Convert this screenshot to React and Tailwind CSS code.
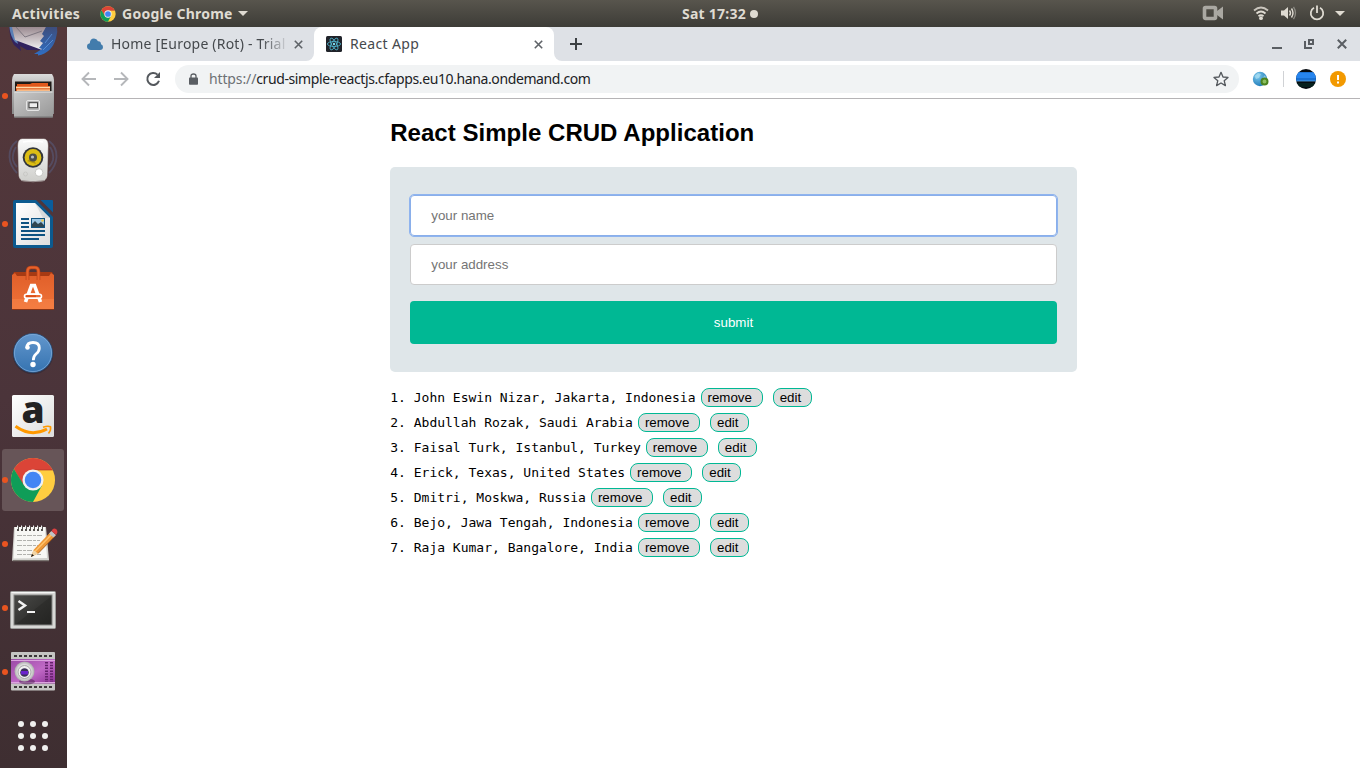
import React from "react";

const people = [
  "John Eswin Nizar, Jakarta, Indonesia",
  "Abdullah Rozak, Saudi Arabia",
  "Faisal Turk, Istanbul, Turkey",
  "Erick, Texas, United States",
  "Dmitri, Moskwa, Russia",
  "Bejo, Jawa Tengah, Indonesia",
  "Raja Kumar, Bangalore, India",
];

function ChromeLogo({ className }) {
  return (
    <svg viewBox="0 0 48 48" className={className}>
      <circle cx="24" cy="24" r="23" fill="#ffcd40" />
      <path d="M4.1 12.5A23 23 0 0 1 43.9 12.5L44 13.5H24L14 29.8Z" fill="#db4437" />
      <path d="M4.1 12.5A23 23 0 0 0 24 47L33.5 29.5L24 34.5L14.5 29.5Z" fill="#0f9d58" />
      <path d="M24 13.5H44.5" stroke="#b5362b" strokeWidth="0.8" />
      <circle cx="24" cy="24" r="11" fill="#f1f1f1" />
      <circle cx="24" cy="24" r="8.6" fill="#4285f4" />
    </svg>
  );
}

function Thunderbird() {
  return (
    <svg viewBox="0 27 67 37" className="h-[37px] w-[67px]">
      <defs>
        <linearGradient id="mail" x1="0" y1="0" x2="0" y2="1">
          <stop offset="0" stopColor="#9a8a90" />
          <stop offset="1" stopColor="#f4f2f4" />
        </linearGradient>
        <linearGradient id="bird" x1="0" y1="0" x2="0" y2="1">
          <stop offset="0" stopColor="#3d4d7c" />
          <stop offset="1" stopColor="#2f6fc4" />
        </linearGradient>
      </defs>
      <path d="M9.5 27Q9 37 14 45L21 51L20 46L27 50L44 50L46 27Z" fill="#32235e" />
      <path d="M9.5 27Q10 36 15 42L18 44L14 27Z" fill="#5a7fb5" />
      <path d="M12 27L15 40L42 50L46 27Z" fill="url(#mail)" />
      <path d="M16 27L25 37L42 31" fill="none" stroke="#77707a" strokeWidth="0.9" />
      <path d="M46 27L42 34L44 36L40 41L43 43L39 48L42 49L34 54L38 54L38 55.5Q52 53 56 38Q58 32 57 27Z" fill="url(#bird)" />
      <path d="M45 43L52 34M43 50L53 40" stroke="#5d95df" strokeWidth="0.8" />
    </svg>
  );
}

function Files() {
  return (
    <svg viewBox="0 0 67 64" className="h-16 w-[67px]">
      <defs>
        <linearGradient id="cab" x1="0" y1="0" x2="0" y2="1">
          <stop offset="0" stopColor="#dcdcdc" />
          <stop offset="0.3" stopColor="#b8b8b8" />
          <stop offset="1" stopColor="#8a8a8a" />
        </linearGradient>
        <linearGradient id="cabFront" x1="0" y1="0" x2="1" y2="1">
          <stop offset="0" stopColor="#c9c9c9" />
          <stop offset="1" stopColor="#979797" />
        </linearGradient>
      </defs>
      <path d="M14 10H52Q54 13 54 16V50H12V16Q12 13 14 10Z" fill="url(#cab)" />
      <rect x="15" y="17.5" width="36.5" height="10" fill="#1f1a17" />
      <path d="M17 20H30L32 19H48V22H50V27H16V22H17Z" fill="#e0581c" />
      <path d="M16 23.5H50M17 26.2H50" stroke="#ffd9a8" strokeWidth="1.3" />
      <rect x="14" y="27.5" width="39" height="26" rx="1" fill="url(#cabFront)" />
      <path d="M14.5 28H52.5" stroke="#e8e8e8" />
      <path d="M14 53H53" stroke="#737373" />
      <rect x="26.5" y="36.5" width="13" height="10" rx="1.5" fill="#b4b4b4" stroke="#e5e5e5" />
      <rect x="29" y="38.7" width="8.5" height="5" fill="#eee" stroke="#3d3d3d" />
    </svg>
  );
}

function Rhythmbox() {
  return (
    <svg viewBox="0 0 67 64" className="h-16 w-[67px]">
      <defs>
        <linearGradient id="spk" x1="0" y1="0" x2="0" y2="1">
          <stop offset="0" stopColor="#fafafa" />
          <stop offset="1" stopColor="#cfcfcc" />
        </linearGradient>
      </defs>
      <g fill="none" stroke="#5b6b98" strokeWidth="1.8" opacity="0.4">
        <path d="M17 13Q9 19 9.500 29Q10 38 17 45M16 19Q12 25 13 32Q14 36 17 39" />
        <path d="M49 13Q57 19 56.500 29Q56 38 49 45M50 19Q54 25 53 32Q52 36 49 39" />
      </g>
      <path d="M22 11H44Q48 11 48 18L47 48Q46 53 41 53H25Q20 53 19 48L18 18Q18 11 22 11Z" fill="url(#spk)" stroke="#e0e0dd" strokeWidth="0.5" />
      <path d="M23 14Q33 12 43 14" stroke="#fff" strokeWidth="1.5" fill="none" />
      <circle cx="33" cy="29.500" r="10.3" fill="#33363a" />
      <circle cx="33" cy="29.500" r="8.4" fill="#dcbd14" />
      <path d="M27 33L33 29.500L36 36Z" fill="#8a740c" opacity="0.55" />
      <circle cx="33" cy="29.500" r="4" fill="#4e4f48" />
      <circle cx="32.500" cy="29" r="1.6" fill="#b8bcc0" />
      <circle cx="39" cy="44.500" r="3.8" fill="#fff" stroke="#b9b9b6" strokeWidth="0.7" />
      <circle cx="25.500" cy="46" r="2" fill="none" stroke="#c4c4c0" strokeWidth="0.8" />
      <path d="M21 52.500Q33 55 45 52.500" stroke="#9a8f8f" fill="none" />
    </svg>
  );
}

function Writer() {
  return (
    <svg viewBox="0 0 67 64" className="h-16 w-[67px]">
      <defs>
        <linearGradient id="page" x1="0" y1="0" x2="1" y2="1">
          <stop offset="0" stopColor="#ffffff" />
          <stop offset="1" stopColor="#dedede" />
        </linearGradient>
      </defs>
      <path d="M15 8H36L53 25V54Q53 56 51 56H15Q13 56 13 54V10Q13 8 15 8Z" fill="#0c5a8f" />
      <path d="M16 11H35L50 26V53H16Z" fill="url(#page)" />
      <path d="M35 11L50 26H43Z" fill="#c7cbcf" opacity="0.6" />
      <path d="M40.500 8H52Q53 8 53 9V20.500Z" fill="#0a5d9b" />
      <g stroke="#0f5381" strokeWidth="1.9">
        <path d="M21 27H29M21 31H29M21 35H29M21 39H45M21 43H45M21 47H39" />
      </g>
      <rect x="31.500" y="26.500" width="13" height="9" fill="#9dc7e4" stroke="#0f5381" />
      <path d="M32 35V32L35 29L38 32L41 30L44 33V35Z" fill="#2f4651" />
      <circle cx="42.500" cy="28.500" r="1.3" fill="#efc94f" />
    </svg>
  );
}

function Software() {
  return (
    <svg viewBox="0 0 67 64" className="h-16 w-[67px]">
      <defs>
        <linearGradient id="bag" x1="0" y1="0" x2="0" y2="1">
          <stop offset="0" stopColor="#e05f2a" />
          <stop offset="1" stopColor="#ef7238" />
        </linearGradient>
      </defs>
      <path d="M14 16H52L54 20H12Z" fill="#a63a13" />
      <path d="M12 19L15 17L17 20H49L51 17L54 19V53H12Z" fill="url(#bag)" />
      <path d="M12 43H54V53H12Z" fill="#ff9257" opacity="0.35" />
      <path d="M27.500 24V16Q27.500 11.500 31 11.500H35Q38.500 11.500 38.500 16V24" fill="none" stroke="#b8431a" strokeWidth="3.6" />
      <path d="M27.500 24V16Q27.500 11.500 31 11.500H35Q38.500 11.500 38.500 16V24" fill="none" stroke="#e8622b" strokeWidth="2.2" />
      <path d="M25.500 46L31.500 29.500H34.500L40.500 46M28 39H38" fill="none" stroke="#fff" strokeWidth="3.6" />
      <rect x="24.500" y="38.300" width="17" height="3.800" rx="1.900" fill="#ed6c34" stroke="#fff" strokeWidth="1.600" />
      <path d="M26 40.200H36" stroke="#d94f19" strokeWidth="1.8" />
      <path d="M12 53.500H54" stroke="#853316" />
    </svg>
  );
}

function Help() {
  return (
    <svg viewBox="0 0 67 64" className="h-16 w-[67px]">
      <defs>
        <linearGradient id="helpBg" x1="0" y1="0" x2="0" y2="1">
          <stop offset="0" stopColor="#6397cd" />
          <stop offset="1" stopColor="#3573b0" />
        </linearGradient>
      </defs>
      <circle cx="33" cy="34" r="20.300" fill="#2a2636" opacity="0.5" />
      <circle cx="33" cy="33" r="19.500" fill="url(#helpBg)" stroke="#284e79" strokeWidth="0.8" />
      <circle cx="33" cy="33" r="18.600" fill="none" stroke="#82afdc" strokeWidth="0.7" />
      <path d="M27 27.500Q27 22.500 33 22.500Q39.300 22.500 39.300 28Q39.300 31.300 36 34Q33.300 36.300 33.300 40.300" fill="none" stroke="#fff" strokeWidth="2.800" />
      <circle cx="27.500" cy="27.500" r="2.300" fill="#fff" />
      <circle cx="33" cy="44.500" r="2.700" fill="#fff" />
    </svg>
  );
}

function Amazon() {
  return (
    <svg viewBox="0 0 67 64" className="h-16 w-[67px]">
      <defs>
        <linearGradient id="amz" x1="0" y1="0" x2="1" y2="1">
          <stop offset="0" stopColor="#ffffff" />
          <stop offset="0.5" stopColor="#eeeeee" />
          <stop offset="1" stopColor="#dcdcdc" />
        </linearGradient>
      </defs>
      <rect x="12" y="11" width="42" height="42" rx="1.500" fill="url(#amz)" />
      <text x="33" y="39" textAnchor="middle" fontFamily="Open Sans" fontWeight="800" fontSize="37" fill="#222">a</text>
      <path d="M15.500 42.300Q31 53.500 47 45" fill="none" stroke="#ff9900" strokeWidth="3" />
      <path d="M43 43.300Q48 41.500 50.500 42.800Q51.300 46 48.500 49.500" fill="none" stroke="#ff9900" strokeWidth="1.600" />
    </svg>
  );
}

function Notes() {
  return (
    <svg viewBox="0 0 67 64" className="h-16 w-[67px]">
      <path d="M14 15H46L49 48L12 49Z" fill="#d1d1cd" />
      <path d="M15 15H45L47 46L13.500 46.500Z" fill="#f7f7f4" />
      <path d="M12.500 48.700H49" stroke="#7b7571" strokeWidth="1.200" />
      <path d="M18 14V19M22 14V19M26 14V19M30 14V19M34 14V19M38 14V19M42 14V19" stroke="#55524f" strokeWidth="2" />
      <path d="M17.500 13.500V17M21.500 13.500V17M25.500 13.500V17M29.500 13.500V17M33.500 13.500V17M37.500 13.500V17M41.500 13.500V17" stroke="#eeeeee" strokeWidth="1" />
      <g stroke="#a9a9a6" strokeWidth="0.900" strokeDasharray="5 1 3 1">
        <path d="M17 23.500H43M17 28.500H40M17 33.500H38M17 38.500H33M17 42.500H41" />
      </g>
      <path d="M31 45L33.500 38L51 19.500L55.500 23.500L38 41.500Z" fill="#ee9838" />
      <path d="M35 39.500L53 21" stroke="#ffc36b" strokeWidth="1.500" />
      <path d="M38 41.500L55.500 23.500" stroke="#aa5d16" strokeWidth="0.900" />
      <path d="M31 45L33.500 38L38 41.500Z" fill="#f0d4a5" />
      <path d="M31 45L32 42L34 43.500Z" fill="#111" />
      <path d="M49 21.500L51.500 19L56 23L53.500 25.500Z" fill="#bfc3c7" />
      <path d="M51.500 19Q53.500 15 56.500 17.500Q58.500 20 56 23Z" fill="#dc4040" />
    </svg>
  );
}

function Terminal() {
  return (
    <svg viewBox="0 0 67 64" className="h-16 w-[67px]">
      <defs>
        <linearGradient id="term" x1="0" y1="0" x2="1" y2="1">
          <stop offset="0" stopColor="#4a4a48" />
          <stop offset="0.5" stopColor="#363634" />
          <stop offset="0.52" stopColor="#2e2e2c" />
          <stop offset="1" stopColor="#242422" />
        </linearGradient>
      </defs>
      <rect x="10.500" y="15.500" width="45" height="37" rx="1" fill="#d8d8d6" stroke="#9b9b99" />
      <path d="M11.500 16.500H54.500" stroke="#f6f6f6" />
      <rect x="13.500" y="18.500" width="39" height="31" fill="#848482" />
      <rect x="14.500" y="19.500" width="37" height="29" fill="url(#term)" />
      <path d="M18.500 25L25 29.500L18.500 34" fill="none" stroke="#f2f2f2" strokeWidth="2.500" />
      <path d="M27 36H35" stroke="#f2f2f2" strokeWidth="2" />
    </svg>
  );
}

function Recorder() {
  return (
    <svg viewBox="0 0 67 64" className="h-16 w-[67px]">
      <defs>
        <linearGradient id="film" x1="0" y1="0" x2="1" y2="1">
          <stop offset="0" stopColor="#9a4aa5" />
          <stop offset="0.55" stopColor="#c069c6" />
          <stop offset="1" stopColor="#8c3295" />
        </linearGradient>
        <radialGradient id="lens">
          <stop offset="0" stopColor="#999" />
          <stop offset="0.6" stopColor="#eee" />
          <stop offset="1" stopColor="#aaa" />
        </radialGradient>
      </defs>
      <rect x="11" y="12" width="44" height="38.500" rx="1" fill="#c4c4c2" />
      <rect x="11" y="19" width="44" height="24.500" fill="url(#film)" />
      <path d="M11 20.500H55M11 42.500H55" stroke="#dba4de" />
      <path d="M14 16H53M14 47H53" stroke="#3b3738" strokeWidth="2" strokeDasharray="3 2" />
      <path d="M46.500 22V42M51.500 22V42" stroke="#64216c" strokeWidth="3" strokeDasharray="1.500 1.300" />
      <ellipse cx="27" cy="41.500" rx="8" ry="3" fill="#3d1542" opacity="0.45" />
      <circle cx="24.500" cy="31.500" r="10" fill="url(#lens)" />
      <circle cx="24.500" cy="32" r="6.500" fill="#f1f1f1" stroke="#a5a5a5" />
      <circle cx="24.500" cy="32.500" r="4.300" fill="#3a2f56" />
      <rect x="21" y="31" width="7" height="3.500" fill="#6a22cc" />
    </svg>
  );
}

function AppsGrid() {
  return (
    <svg viewBox="0 0 67 64" className="h-16 w-[67px]" fill="#f0f0ee">
      {[20, 32, 44].map((y) => [21, 33, 45].map((x) => <circle key={x + "-" + y} cx={x} cy={y} r="3" />))}
    </svg>
  );
}

function DockItem({ running, active, children }) {
  return (
    <div className="relative flex h-16 w-[67px] shrink-0 items-center justify-center">
      {active && <div className="absolute top-px left-0.5 h-[62px] w-[62px] rounded-[3px] bg-[#675558]" />}
      <div className="relative flex w-full justify-center">{children}</div>
      {running && <div className="absolute top-[29px] left-[2px] size-[6px] rounded-full bg-[#e95420]" />}
    </div>
  );
}

function Dock() {
  return (
    <nav className="flex w-[67px] shrink-0 flex-col overflow-hidden bg-linear-to-b from-[#54383b] via-[#4b343a] to-[#3e2e31]">
      <div className="h-[37px] shrink-0"><Thunderbird /></div>
      <DockItem running><Files /></DockItem>
      <DockItem><Rhythmbox /></DockItem>
      <DockItem running><Writer /></DockItem>
      <DockItem><Software /></DockItem>
      <DockItem><Help /></DockItem>
      <DockItem><Amazon /></DockItem>
      <DockItem running active><ChromeLogo className="mr-px size-[46px]" /></DockItem>
      <DockItem running><Notes /></DockItem>
      <DockItem running><Terminal /></DockItem>
      <DockItem running><Recorder /></DockItem>
      <DockItem><AppsGrid /></DockItem>
    </nav>
  );
}

function TopBar() {
  return (
    <header className="grid h-[27px] shrink-0 grid-cols-[680px_1fr] bg-linear-to-b from-[#58554d] to-[#3d3c37] font-['Noto_Sans','Open_Sans',sans-serif] text-[14px] font-bold text-[#dfdbd2]">
      <div className="flex items-center pl-3">
        <span className="w-[88px] shrink-0 pb-px tracking-[0.32px]">Activities</span>
        <ChromeLogo className="size-4 shrink-0" />
        <span className="ml-1.5 w-[112px] shrink-0 pb-px whitespace-nowrap tracking-[0.25px]">Google Chrome</span>
        <svg viewBox="0 0 10 5" className="ml-1 h-[5px] w-[10px] shrink-0"><path d="M0 0H10L5 5Z" fill="#dfdbd2" /></svg>
      </div>
      <div className="flex items-center">
        <span className="ml-0.5 w-16 pb-px whitespace-nowrap tracking-[0.25px]">Sat 17:32</span>
        <span className="ml-1 size-2 rounded-full bg-[#dfdbd2]" />
        <svg viewBox="0 0 160 27" className="ml-auto h-[27px] w-[160px]">
          <rect x="4.500" y="7.500" width="11" height="11" rx="1" fill="none" stroke="#aaa8a2" strokeWidth="3.600" />
          <path d="M17 11L23 6.500V19.500L17 15Z" fill="#aaa8a2" />
          <g fill="none" stroke="#dfdbd2" strokeWidth="1.800">
            <path d="M54 10.500Q61 4.500 68 10.500" opacity="0.85" />
            <path d="M56.500 13.500Q61 9.500 65.500 13.500M58.500 16.200Q61 14 63.500 16.200" />
          </g>
          <circle cx="61" cy="18.200" r="1.900" fill="#dfdbd2" />
          <path d="M81 10.500H84L88 7V19L84 15.500H81Z" fill="#dfdbd2" />
          <path d="M89.500 10.500Q91.500 13 89.500 15.500M91.500 8.500Q94.500 13 91.500 17.500" fill="none" stroke="#dfdbd2" strokeWidth="1.400" />
          <path d="M93.500 6.800Q97.500 13 93.500 19.200" fill="none" stroke="#8b8982" strokeWidth="1.300" />
          <path d="M114 7.800A6.200 6.200 0 1 0 120 7.800M117 5.500V13" fill="none" stroke="#dfdbd2" strokeWidth="1.800" />
          <path d="M135 11H145L140 16Z" fill="#dfdbd2" />
        </svg>
      </div>
    </header>
  );
}

function TabClose() {
  return (
    <svg viewBox="0 0 9 9" className="size-[9px] shrink-0"><path d="M0.800 0.800L8.200 8.200M8.200 0.800L0.800 8.200" stroke="#5f6368" strokeWidth="1.600" /></svg>
  );
}

function TabStrip() {
  return (
    <div className="flex h-[34px] bg-white font-['Noto_Sans','Open_Sans',sans-serif] text-[14px] text-[#45494d]">
      <div className="flex w-[247px] items-center rounded-br-lg bg-[#dee1e6] pl-5">
        <svg viewBox="0 0 16 12" className="h-3 w-4 shrink-0"><path d="M4 12Q0 12 0 8.600Q0 5.700 2.800 5.200Q3 0.500 7 0.500Q9.800 0.500 11 3.200Q14 3 14 6.200Q16 7 16 9Q16 12 13 12Z" fill="#427cac" /></svg>
        <span className="ml-2 w-[175px] overflow-hidden pb-0.5 whitespace-nowrap tracking-[0.21px] [mask-image:linear-gradient(to_right,black_86%,transparent_102%)]">Home [Europe (Rot) - Trial</span>
        <span className="ml-[8px]"><TabClose /></span>
      </div>
      <div className="flex w-[240px] bg-[#dee1e6]">
        <div className="flex w-full items-center rounded-t-lg bg-white pl-3">
          <svg viewBox="0 0 16 16" className="size-4">
            <rect width="16" height="16" rx="1.500" fill="#20232a" />
            <g fill="none" stroke="#4fb3cc" strokeWidth="0.850">
              <ellipse cx="8" cy="8" rx="6.600" ry="2.500" />
              <ellipse cx="8" cy="8" rx="6.600" ry="2.500" transform="rotate(60 8 8)" />
              <ellipse cx="8" cy="8" rx="6.600" ry="2.500" transform="rotate(120 8 8)" />
            </g>
            <circle cx="8" cy="8" r="1.200" fill="#7edcf0" />
          </svg>
          <span className="ml-2 w-[183.500px] pb-0.5 tracking-[0.35px]">React App</span>
          <TabClose />
        </div>
      </div>
      <div className="flex flex-1 items-center rounded-bl-lg bg-[#dee1e6] pl-4">
        <svg viewBox="0 0 12 12" className="size-3"><path d="M6 0V12M0 6H12" stroke="#3c4043" strokeWidth="2" /></svg>
        <svg viewBox="-16 0 96 34" className="ml-auto h-[34px] w-24" fill="none" stroke="#5a5e63" strokeWidth="2">
          <path d="M-8 21H2" />
          <path d="M25 14V21H32" />
          <rect x="29" y="13" width="4" height="4" />
          <path d="M57.800 12.800L66.200 21.200M66.200 12.800L57.800 21.200" />
        </svg>
      </div>
    </div>
  );
}

function Toolbar() {
  return (
    <div className="flex h-[38px] items-center border-b border-[#b6b4b6] bg-white pb-px">
      <svg viewBox="0 0 108 36" className="h-9 w-[108px]" fill="none" strokeWidth="1.900">
        <path d="M29 18H16M22 11.500L15.500 18L22 24.500" stroke="#b5b7ba" />
        <path d="M47 18H60M54 11.500L60.500 18L54 24.500" stroke="#b5b7ba" />
        <path d="M90.500 13.600A6 6 0 1 0 92 19.800" stroke="#54585d" strokeWidth="2" />
        <path d="M93 11V17H87Z" fill="#54585d" />
      </svg>
      <div className="flex h-7 w-[1064px] items-center rounded-full bg-[#f1f3f4] pl-3.5">
        <svg viewBox="0 0 9 12" className="h-3 w-[9px]"><path d="M2 5V3Q2 1 4.500 1Q7 1 7 3V5" fill="none" stroke="#5a5e63" strokeWidth="1.300" /><rect y="4.500" width="9" height="7.200" rx="0.800" fill="#5a5e63" /></svg>
        <span className="ml-[11px] pb-0.5 whitespace-nowrap font-['Noto_Sans','Open_Sans',sans-serif] text-[14px] tracking-[-0.39px] text-[#202124]"><span className="tracking-[-0.13px] text-[#6d7175]">https://</span>crud-simple-reactjs.cfapps.eu10.hana.ondemand.com</span>
        <svg viewBox="0 0 24 24" className="mr-[10px] ml-auto size-4"><path d="M12 2L15 9L22.500 9.600L16.800 14.500L18.600 22L12 18L5.400 22L7.200 14.500L1.500 9.600L9 9Z" fill="none" stroke="#54585d" strokeWidth="2" strokeLinejoin="round" /></svg>
      </div>
      <svg viewBox="0 0 120 36" className="h-9 w-[120px]">
        <defs>
          <radialGradient id="globe" cx="0.350" cy="0.300" r="0.800">
            <stop offset="0" stopColor="#7cc8ec" />
            <stop offset="1" stopColor="#1875b5" />
          </radialGradient>
          <clipPath id="avatar"><circle cx="67" cy="18" r="10" /></clipPath>
        </defs>
        <circle cx="21" cy="18" r="7.200" fill="url(#globe)" />
        <path d="M15.500 15L19 12L22 13L20 17L17 18ZM22 19L26 14L27.500 18L24 21Z" fill="#b9e6f5" opacity="0.600" />
        <circle cx="25.500" cy="20.500" r="3" fill="#8cbf60" stroke="#4b8320" strokeWidth="2" />
        <path d="M44.500 10V26" stroke="#d0d2d5" />
        <g clipPath="url(#avatar)">
          <rect x="57" y="8" width="20" height="20" fill="#050b10" />
          <rect x="57" y="11" width="20" height="9" fill="#1970d2" />
          <rect x="57" y="12" width="20" height="5" fill="#2785ee" />
          <path d="M57 20H77" stroke="#5babe9" strokeWidth="0.800" />
          <rect x="57" y="22" width="20" height="4" fill="#06201d" />
        </g>
        <circle cx="99" cy="18" r="8" fill="#f29900" />
        <path d="M99 14V19M99 20.500V22.500" stroke="#fff" strokeWidth="2" />
      </svg>
    </div>
  );
}

function CrudPage() {
  return (
    <main className="flex-1 overflow-hidden bg-white pl-[323.25px] font-['Liberation_Sans',Arial,sans-serif] text-black">
      <div className="w-[686.5px] pt-5">
        <h2 className="h-7 text-[24px] leading-7 font-bold tracking-[0.03px]">React Simple CRUD Application</h2>
        <form className="mt-5 flex h-[205px] flex-col rounded-[5px] bg-[#dfe6e9] px-5 pt-7" onSubmit={(e) => e.preventDefault()}>
          <input type="text" placeholder="your name" className="h-[41px] rounded border border-[#8aafea] bg-white px-5 text-[13.333px] outline-1 outline-[#8fb4ef] placeholder:text-[#757575]" />
          <input type="text" placeholder="your address" className="mt-2 h-[41px] rounded border border-[#cccccc] bg-white px-5 text-[13.333px] placeholder:text-[#757575]" />
          <button className="mt-4 h-[43px] rounded bg-[#00b894] text-[13.333px] text-white">submit</button>
        </form>
        <ol className="mt-[13px] font-['DejaVu_Sans_Mono',monospace] text-[13px]">
          {people.map((person, i) => (
            <li key={person} className="flex h-[25px] items-center whitespace-pre">
              <span>{i + 1 + ". " + person}</span>
              <button className="mx-[5px] h-[19px] rounded-lg border border-[#00b894] bg-[#dddddd] px-1.5 font-['Liberation_Sans',Arial,sans-serif] text-[13.333px] leading-[17px] whitespace-pre">{"remove "}</button>
              <button className="ml-[5px] h-[19px] rounded-lg border border-[#00b894] bg-[#dddddd] px-1.5 font-['Liberation_Sans',Arial,sans-serif] text-[13.333px] leading-[17px] whitespace-pre">{"edit "}</button>
            </li>
          ))}
        </ol>
      </div>
    </main>
  );
}

export default function App() {
  return (
    <div className="flex h-screen w-[1360px] flex-col overflow-hidden">
      <TopBar />
      <div className="flex min-h-0 flex-1">
        <Dock />
        <section className="flex min-w-0 flex-1 flex-col">
          <TabStrip />
          <Toolbar />
          <CrudPage />
        </section>
      </div>
    </div>
  );
}
